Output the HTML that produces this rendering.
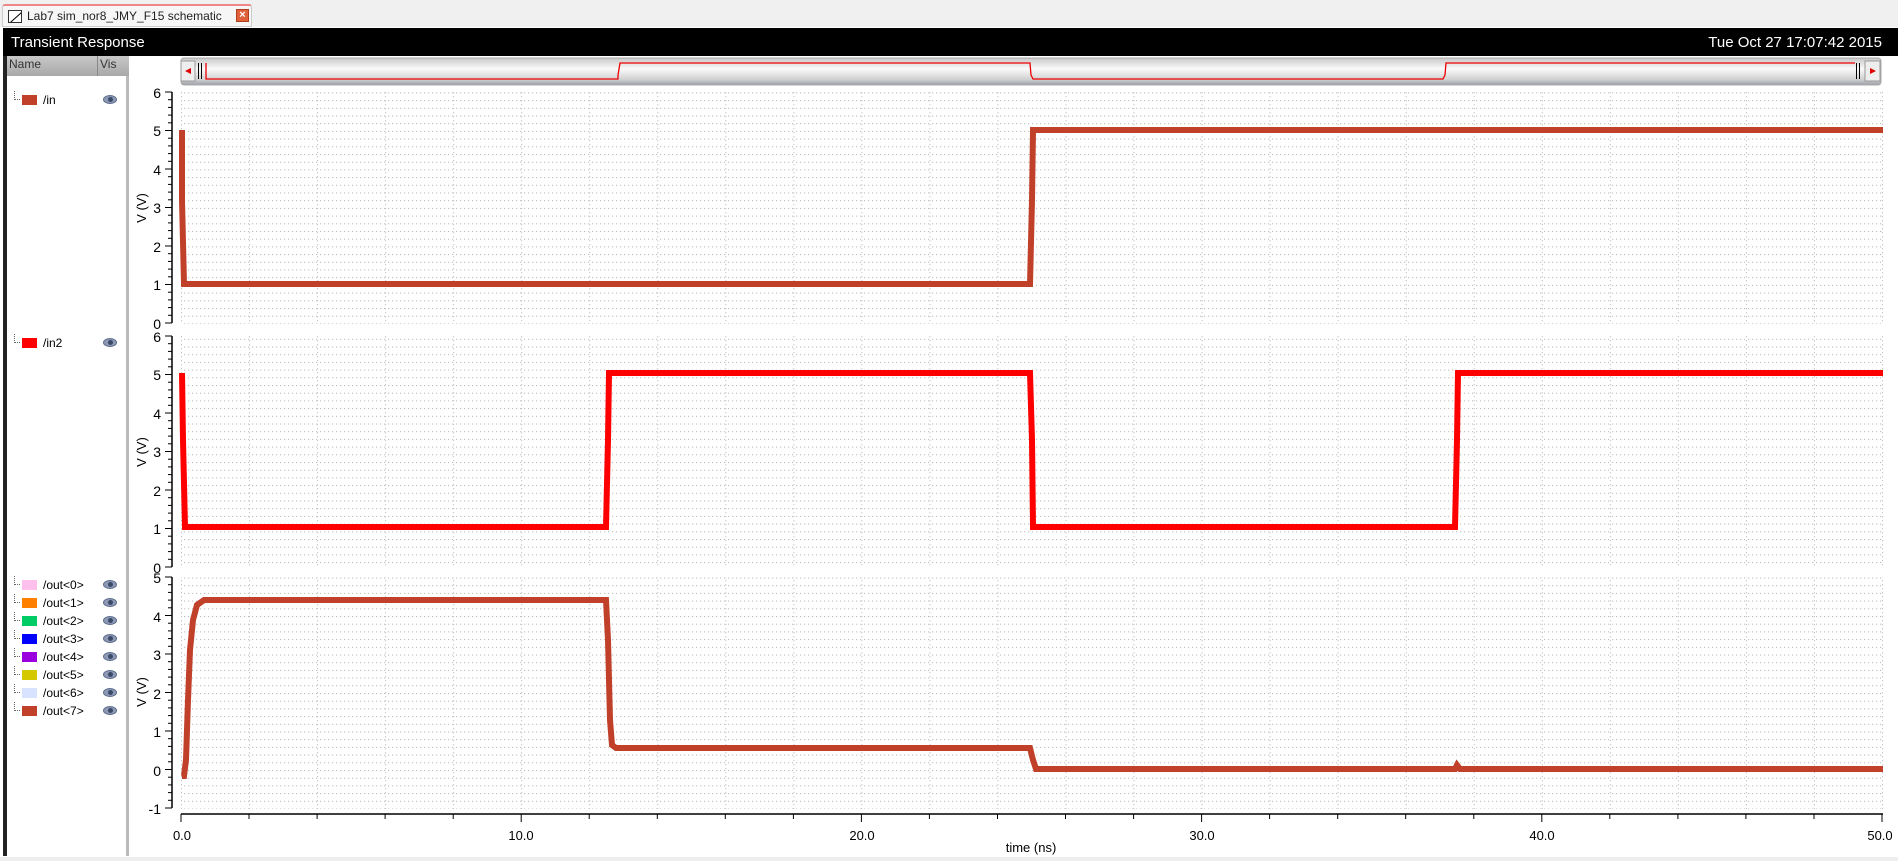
<!DOCTYPE html>
<html><head><meta charset="utf-8"><style>
*{margin:0;padding:0;box-sizing:border-box}
body{width:1898px;height:861px;overflow:hidden;background:#fff;font-family:"Liberation Sans","DejaVu Sans",sans-serif;position:relative}
.abs{position:absolute}
.ent{position:absolute;left:8px;height:18px;font-size:12px;color:#000;line-height:18px}
.ent .dots{position:absolute;left:6px;top:0;width:6px;height:9px;border-left:1px dotted #666;border-bottom:1px dotted #666}
.ent .sw{position:absolute;left:14px;top:4px;width:15px;height:10px}
.ent .nm{position:absolute;left:35px;top:0;white-space:nowrap}
.ent .eye{position:absolute;left:95px;top:4px;width:14px;height:9px;border-radius:50%;background:#8c98b4;border:1px solid #5a6a8a}
.ent .eye:after{content:"";position:absolute;left:4px;top:1px;width:5px;height:5px;border-radius:50%;background:#3c4a6a}
</style></head><body>
<div class="abs" style="left:0;top:0;width:1898px;height:27px;background:#f0f0f0"></div>
<div class="abs" style="left:2px;top:4px;width:250px;height:23px;background:#f6f6f6;border:1px solid #ccc;border-top:2px solid #e88;border-radius:3px 3px 0 0"></div>
<div class="abs" style="left:8px;top:10px;width:14px;height:13px;border:1px solid #333;background:#fff;overflow:hidden"><div style="position:absolute;left:-2px;top:5px;width:20px;height:1px;background:#000;transform:rotate(-42deg)"></div></div>
<div class="abs" style="left:27px;top:9px;font-size:12px;color:#222;white-space:nowrap">Lab7 sim_nor8_JMY_F15 schematic</div>
<div class="abs" style="left:236px;top:9px;width:13px;height:13px;background:#e0603a;border:1px solid #b04020;color:#fff;font-size:11px;line-height:11px;text-align:center;font-weight:bold">×</div>
<div class="abs" style="left:3px;top:28px;width:1895px;height:28px;background:#000"></div>
<div class="abs" style="left:11px;top:34px;font-size:15px;color:#fff">Transient Response</div>
<div class="abs" style="right:16px;top:34px;font-size:15px;color:#fff">Tue Oct 27 17:07:42 2015</div>
<div class="abs" style="left:3px;top:56px;width:5px;height:800px;background:#222"></div>
<div class="abs" style="left:8px;top:330px;width:5px;height:221px;background:#9a9a10;border:1px solid #666;border-radius:3px"></div>
<div class="abs" style="left:7px;top:56px;width:122px;height:800px;background:#fff;border-right:3px solid #bbb"></div>
<div class="abs" style="left:7px;top:56px;width:122px;height:20px;background:linear-gradient(#c8c8c8,#a8a8a8)"></div>
<div class="abs" style="left:9px;top:57px;font-size:12px;color:#333">Name</div>
<div class="abs" style="left:97px;top:56px;width:1px;height:20px;background:#888"></div>
<div class="abs" style="left:100px;top:57px;font-size:12px;color:#333">Vis</div>

<div class="ent" style="top:91px"><span class="dots"></span><span class="sw" style="background:#c0402a"></span><span class="nm">/in</span><span class="eye"></span></div>
<div class="ent" style="top:334px"><span class="dots"></span><span class="sw" style="background:#ff0000"></span><span class="nm">/in2</span><span class="eye"></span></div>
<div class="ent" style="top:576px"><span class="dots"></span><span class="sw" style="background:#ffc0ee"></span><span class="nm">/out&lt;0&gt;</span><span class="eye"></span></div>
<div class="ent" style="top:594px"><span class="dots"></span><span class="sw" style="background:#ff8000"></span><span class="nm">/out&lt;1&gt;</span><span class="eye"></span></div>
<div class="ent" style="top:612px"><span class="dots"></span><span class="sw" style="background:#00cc66"></span><span class="nm">/out&lt;2&gt;</span><span class="eye"></span></div>
<div class="ent" style="top:630px"><span class="dots"></span><span class="sw" style="background:#0000ff"></span><span class="nm">/out&lt;3&gt;</span><span class="eye"></span></div>
<div class="ent" style="top:648px"><span class="dots"></span><span class="sw" style="background:#9900dd"></span><span class="nm">/out&lt;4&gt;</span><span class="eye"></span></div>
<div class="ent" style="top:666px"><span class="dots"></span><span class="sw" style="background:#d4c800"></span><span class="nm">/out&lt;5&gt;</span><span class="eye"></span></div>
<div class="ent" style="top:684px"><span class="dots"></span><span class="sw" style="background:#d8e4ff"></span><span class="nm">/out&lt;6&gt;</span><span class="eye"></span></div>
<div class="ent" style="top:702px"><span class="dots"></span><span class="sw" style="background:#c0402a"></span><span class="nm">/out&lt;7&gt;</span><span class="eye"></span></div>

<svg class="abs" style="left:0;top:0" width="1898" height="861" font-family="Liberation Sans, sans-serif">
<defs>
<linearGradient id="sb" x1="0" y1="0" x2="0" y2="1"><stop offset="0" stop-color="#c8c8c8"/><stop offset="0.4" stop-color="#fafafa"/><stop offset="0.8" stop-color="#d0d0d0"/><stop offset="1" stop-color="#9aa0a8"/></linearGradient>
<pattern id="hg" patternUnits="userSpaceOnUse" width="4" height="7.7"><rect x="0" y="0" width="1.2" height="1" fill="#b8b8b8"/></pattern>
<pattern id="vg" patternUnits="userSpaceOnUse" x="181" width="68.04" height="4"><rect x="0" y="0" width="1" height="1.3" fill="#c4c4c4"/></pattern>
</defs>
<rect x="181" y="58" width="1700" height="27" rx="3" fill="url(#sb)" stroke="#aaa"/>
<rect x="181" y="61" width="14" height="20" fill="#eee" stroke="#999"/>
<path d="M185,71 L191,68 L191,74Z" fill="#d00"/>
<rect x="198" y="63" width="1" height="16" fill="#000"/><rect x="201" y="63" width="1" height="16" fill="#000"/>
<rect x="1865" y="61" width="15" height="20" fill="#eee" stroke="#999"/>
<path d="M1876,71 L1870,68 L1870,74Z" fill="#d00"/>
<rect x="1856" y="63" width="1" height="16" fill="#000"/><rect x="1859" y="63" width="1" height="16" fill="#000"/>
<path d="M206,63 L206,79 L618,79 L618,75 L620,63 L1030,63 L1031,75 L1033,79 L1443,79 L1445,75 L1446,63 L1855,63" fill="none" stroke="#e00" stroke-width="1.3"/>
<g>
<rect x="181" y="92" width="1702" height="232" fill="url(#hg)"/>
<rect x="181" y="92" width="1702" height="232" fill="url(#vg)"/>
<rect x="181" y="336" width="1702" height="232" fill="url(#hg)"/>
<rect x="181" y="336" width="1702" height="232" fill="url(#vg)"/>
<rect x="181" y="577" width="1702" height="232" fill="url(#hg)"/>
<rect x="181" y="577" width="1702" height="232" fill="url(#vg)"/>
</g>
<g stroke="#000" stroke-width="1.5" fill="none">
<path d="M172,92 V323 M172,336 V567 M172,577 V808 M181,814 H1883"/>
</g>
<g font-size="14" fill="#000" text-anchor="end">
<text x="161" y="98">6</text><text x="161" y="136">5</text><text x="161" y="175">4</text><text x="161" y="213">3</text><text x="161" y="252">2</text><text x="161" y="290">1</text><text x="161" y="329">0</text>
<text x="161" y="342">6</text><text x="161" y="380">5</text><text x="161" y="419">4</text><text x="161" y="457">3</text><text x="161" y="496">2</text><text x="161" y="534">1</text><text x="161" y="573">0</text>
<text x="161" y="583">5</text><text x="161" y="622">4</text><text x="161" y="660">3</text><text x="161" y="699">2</text><text x="161" y="737">1</text><text x="161" y="776">0</text><text x="161" y="814">-1</text>
</g>
<g font-size="13" fill="#000" text-anchor="middle">
<text transform="translate(146,208) rotate(-90)">V (V)</text>
<text transform="translate(146,452) rotate(-90)">V (V)</text>
<text transform="translate(146,692) rotate(-90)">V (V)</text>
<text x="182" y="840">0.0</text><text x="521" y="840">10.0</text><text x="862" y="840">20.0</text><text x="1202" y="840">30.0</text><text x="1542" y="840">40.0</text><text x="1880" y="840">50.0</text>
<text x="1031" y="852">time (ns)</text>
</g>
<g id="ticks" stroke="#000" stroke-width="1"></g>
<path d="M182,130 L182,200 L184,284 L1030,284 L1032,200 L1033,130 L1883,130" fill="none" stroke="#c0402a" stroke-width="6"/>
<path d="M182,373 L183,440 L185,527 L606,527 L608,440 L609,373 L1030,373 L1032,440 L1033,527 L1455,527 L1457,440 L1458,373 L1883,373" fill="none" stroke="#ff0000" stroke-width="6"/>
<path d="M182,776 L184,776 L186,760 L188,700 L190,650 L193,620 L197,605 L204,600 L606,600 L608,640 L610,720 L612,745 L616,748 L1030,748 L1033,760 L1036,769 L1455,769 L1457,765 L1460,769 L1883,769" fill="none" stroke="#c0402a" stroke-width="6"/>
</svg>
<script>
var g=document.getElementById('ticks'),s='';
function yt(top){for(var i=0;i<=30;i++){var y=top+i*7.7;var l=(i%5==0)?7:4;s+='<path d="M'+(172-l)+','+y.toFixed(1)+' H172"/>';}}
yt(92);yt(336);yt(577);
for(var i=0;i<=25;i++){var x=181+i*68.04;s+='<path d="M'+x.toFixed(1)+',814 V'+(i%5==0?822:819)+'"/>';}
g.innerHTML=s;
</script>
<div class="abs" style="left:0;top:857px;width:1898px;height:4px;background:#eee"></div>
</body></html>
